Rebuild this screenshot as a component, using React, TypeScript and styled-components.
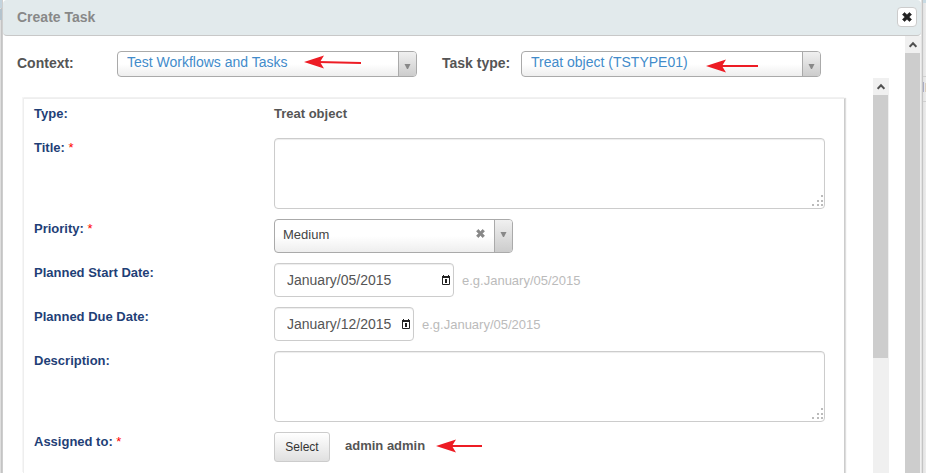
import React from "react";
import styled, { createGlobalStyle } from "styled-components";

const GlobalStyle = createGlobalStyle`
  *, *::before, *::after { box-sizing: border-box; }
  body {
    margin: 0;
    overflow: hidden;
    background: #f4f4f4;
    color: #555;
    font: 13px/20px "Liberation Sans", Arial, sans-serif;
  }
  button, input, select, textarea { font-family: inherit; margin: 0; }
`;

const Page = styled.div`
  display: flex;
  height: 100vh;
`;

const LeftEdge = styled.div`
  flex: none;
  width: 3px;
  background:
    linear-gradient(#c3d3dd 8px, transparent 8px, transparent 9px, #b4c3cd 9px, #b4c3cd 20px, transparent 20px)
      0 0 / 2px 20px no-repeat,
    linear-gradient(90deg, #dedede 1px, #c4c4c4 1px, #c4c4c4 2px, #cecece 2px);
`;

const RightEdge = styled.div`
  flex: none;
  width: 5px;
  background:
    linear-gradient(#c9dbe4, #c9dbe4) 2px 0 / 3px 3px no-repeat,
    linear-gradient(#d0d0d0, #d0d0d0) 2px 76px / 3px 1px no-repeat,
    linear-gradient(#a9acc4, #a9acc4) 2px 82px / 1px 10px no-repeat,
    linear-gradient(#dccfc0, #dccfc0) 4px 83px / 1px 9px no-repeat,
    linear-gradient(#d0d0d0, #d0d0d0) 2px 101px / 3px 1px no-repeat,
    linear-gradient(90deg, #e2e2e2 1px, #c4c4c4 1px, #c4c4c4 2px, #e2e2e2 2px, #ededed);
`;

const Dialog = styled.section`
  flex: 1;
  min-width: 0;
  display: flex;
  flex-direction: column;
  background: #fff;
`;

const Header = styled.header`
  flex: none;
  display: flex;
  align-items: center;
  justify-content: space-between;
  height: 36px;
  padding: 0 4px 1px 14px;
  background: #e2eaec;
  border-bottom: 1px solid #c8c8c8;
  border-radius: 4px;
`;

const Title = styled.h1`
  margin: 0;
  color: #888;
  font-size: 14px;
  line-height: 20px;
`;

const CloseButton = styled.button`
  display: grid;
  place-items: center;
  width: 20px;
  height: 20px;
  padding: 0;
  background: #fff;
  border: 1px solid #ccc;
  border-radius: 4px;
`;

const Body = styled.div`
  flex: 1;
  min-height: 0;
  display: flex;
`;

const Content = styled.div`
  flex: 1;
  min-width: 0;
  display: flex;
  flex-direction: column;
`;

const Filters = styled.div`
  flex: none;
  display: flex;
  padding: 15px 84px 0 14px;
`;

const FilterLabel = styled.label<{ $width: number }>`
  flex: none;
  width: ${(p) => p.$width}px;
  color: #555;
  font-size: 14px;
  font-weight: bold;
  line-height: 24px;
`;

const FilterGap = styled.div`
  flex: none;
  width: 25px;
`;

const SelectBox = styled.div<{ $tall?: boolean }>`
  position: relative;
  display: flex;
  flex: ${(p) => (p.$tall ? "none" : "1")};
  min-width: 0;
  width: ${(p) => (p.$tall ? "239px" : "auto")};
  height: ${(p) => (p.$tall ? 34 : 26)}px;
  overflow: hidden;
  background: linear-gradient(#fff 50%, #eee);
  border: 1px solid #aaa;
  border-radius: 4px;
`;

const Select = styled.select<{ $tall?: boolean }>`
  appearance: none;
  flex: 1;
  min-width: 0;
  padding: 0 24px 4px ${(p) => (p.$tall ? 8 : 9)}px;
  background: none;
  border: 0;
  color: ${(p) => (p.$tall ? "#444" : "#428bca")};
  font-size: ${(p) => (p.$tall ? 13 : 14)}px;
`;

const ArrowCell = styled.span`
  flex: none;
  display: flex;
  justify-content: center;
  width: 18px;
  padding-top: 12px;
  background: linear-gradient(#f0f0f0, #ccc);
  border-left: 1px solid #aaa;
`;

const ClearButton = styled.button`
  align-self: flex-start;
  display: grid;
  width: 9px;
  margin: 9px 9px 0 0;
  padding: 0;
  background: none;
  border: 0;
`;

const Pointer = styled.span<{ $left: number; $top: number }>`
  position: absolute;
  left: ${(p) => p.$left}px;
  top: ${(p) => p.$top}px;
  display: flex;
  pointer-events: none;
`;

const Scroller = styled.div`
  flex: 1;
  min-height: 0;
  display: flex;
  margin-top: 1px;
  padding: 0 16px 0 20px;
`;

const PanelArea = styled.div`
  flex: 1;
  min-width: 0;
  display: flex;
  flex-direction: column;
  padding: 20px 28px 0 0;
`;

const Panel = styled.form`
  flex: 1 0 auto;
  display: flex;
  flex-direction: column;
  gap: 10px;
  padding: 5px 19px 10px 10px;
  border: 1px solid #eee;
  border-right-color: #ccc;
  border-bottom: 0;
  box-shadow: 1px 0 1px #ddd, -1px -1px 0 #f6f6f6;
`;

const Row = styled.div`
  flex: none;
  display: flex;
  min-height: 24px;
`;

const Label = styled.label`
  flex: none;
  width: 240px;
  color: #1f3f77;
  font-weight: bold;
`;

const Star = styled.span`
  color: #f00;
  font-weight: normal;
`;

const Strong = styled.strong`
  color: #555;
`;

const AreaBox = styled.div`
  position: relative;
  flex: 1;
  display: flex;
`;

const TextArea = styled.textarea`
  flex: 1;
  height: 71px;
  padding: 6px 12px;
  resize: none;
  background: #fff;
  border: 1px solid #ccc;
  border-radius: 4px;
  box-shadow: inset 0 1px 1px rgba(0, 0, 0, 0.075);
`;

const Grip = styled.svg`
  position: absolute;
  right: 1px;
  bottom: 1px;
  pointer-events: none;
`;

const DateBox = styled.div<{ $width: number }>`
  flex: none;
  display: flex;
  align-items: center;
  width: ${(p) => p.$width}px;
  height: 34px;
  padding: 0 3px 0 12px;
  background: #fff;
  border: 1px solid #ccc;
  border-radius: 4px;
  box-shadow: inset 0 1px 1px rgba(0, 0, 0, 0.075);
`;

const DateInput = styled.input`
  flex: 1;
  min-width: 0;
  height: 32px;
  padding: 0;
  background: none;
  border: 0;
  color: #555;
  font-size: 14px;
`;

const IconButton = styled.button`
  display: grid;
  padding: 0;
  background: none;
  border: 0;
`;

const Hint = styled.span`
  height: 34px;
  margin-left: 8px;
  color: #bbb;
  line-height: 36px;
`;

const PickButton = styled.button`
  width: 56px;
  height: 30px;
  padding: 0;
  background: linear-gradient(#fff, #e0e0e0);
  border: 1px solid #ccc;
  border-radius: 3px;
  color: #333;
  font-size: 12px;
`;

const Assignee = styled.div`
  display: flex;
  align-items: center;
  gap: 11px;
  padding: 0 0 2px 15px;
`;

const Track = styled.div`
  flex: none;
  display: flex;
  flex-direction: column;
  width: 16px;
  background: #f0f0f0;
`;

const TrackButton = styled.button`
  flex: none;
  display: grid;
  place-items: center;
  height: 17px;
  padding: 0;
  background: #f0f0f0;
  border: 0;
`;

const Thumb = styled.div<{ $share: number }>`
  flex: 0 0 ${(p) => p.$share * 100}%;
  width: 15px;
  background: #cdcdcd;
`;

const Cross = ({ size, color }: { size: number; color: string }) => (
  <svg width={size} height={size} viewBox="0 0 10 10" aria-hidden="true">
    <path
      d="M2.6 0.4 5 2.8 7.4 0.4 9.6 2.6 7.2 5 9.6 7.4 7.4 9.6 5 7.2 2.6 9.6 0.4 7.4 2.8 5 0.4 2.6Z"
      fill={color}
      stroke={color}
      strokeWidth="0.5"
      strokeLinejoin="round"
    />
  </svg>
);

const Triangle = () => (
  <svg width="7" height="5" viewBox="0 0 7 5" aria-hidden="true">
    <path d="M0.500 0H6.500L4 5H3Z" fill="#888" />
  </svg>
);

const RedArrow = ({ length, slope = 0 }: { length: number; slope?: number }) => (
  <svg width={length} height="14" viewBox={`0 0 ${length} 14`} aria-hidden="true">
    <path d={`M14 7 ${length} ${7 + slope}`} stroke="#ed1c24" strokeWidth="2" />
    <path d="M0 7 20 0.4 16 7 20 13.6Z" fill="#ed1c24" />
  </svg>
);

const CalendarIcon = () => (
  <svg width="8" height="10" viewBox="0 0 8 10" aria-hidden="true">
    <path
      d="M0 1H1V0H2V1H6V0H7V1H8V9Q8 10 7 10H1Q0 10 0 9ZM1 3V9H7V3Z"
      fill="#222"
      fillRule="evenodd"
    />
    <path d="M3 4H5V8H3Z" fill="#222" />
  </svg>
);

const ScrollBar = ({ share }: { share: number }) => (
  <Track>
    <TrackButton type="button" aria-label="Scroll up">
      <svg width="8" height="7" viewBox="0 0 8 7" aria-hidden="true">
        <path d="M0.6 5.900 4 2.300 7.400 5.900" fill="none" stroke="#505050" strokeWidth="2" />
      </svg>
    </TrackButton>
    <Thumb $share={share} />
  </Track>
);

type FilterProps = {
  id: string;
  label: string;
  labelWidth: number;
  value: string;
  arrow: React.ReactNode;
};

const Filter = ({ id, label, labelWidth, value, arrow }: FilterProps) => (
  <>
    <FilterLabel htmlFor={id} $width={labelWidth}>{label}</FilterLabel>
    <SelectBox>
      <Select id={id} defaultValue={value}>
        <option>{value}</option>
      </Select>
      {arrow}
      <ArrowCell><Triangle /></ArrowCell>
    </SelectBox>
  </>
);

const LargeText = ({ id }: { id: string }) => (
  <AreaBox>
    <TextArea id={id} />
    <Grip width="12" height="13" viewBox="0 0 12 13" aria-hidden="true">
      <path
        d="M9 0h2v2h-2zM5 5h2v2h-2zM9 5h2v2h-2zM0 9h2v2h-2zM5 9h2v2h-2zM9 9h2v2h-2z"
        fill="#bbb"
      />
    </Grip>
  </AreaBox>
);

type DateRowProps = { id: string; label: string; width: number; value: string };

const DateRow = ({ id, label, width, value }: DateRowProps) => (
  <Row>
    <Label htmlFor={id}>{label}</Label>
    <DateBox $width={width}>
      <DateInput id={id} type="text" defaultValue={value} />
      <IconButton type="button" aria-label="Open calendar"><CalendarIcon /></IconButton>
    </DateBox>
    <Hint>e.g.January/05/2015</Hint>
  </Row>
);

export default function App() {
  return (
    <Page>
      <GlobalStyle />
      <LeftEdge />
      <Dialog role="dialog" aria-labelledby="dialog-title">
        <Header>
          <Title id="dialog-title">Create Task</Title>
          <CloseButton type="button" aria-label="Close">
            <Cross size={10} color="#222" />
          </CloseButton>
        </Header>
        <Body>
          <Content>
            <Filters>
              <Filter
                id="context"
                label="Context:"
                labelWidth={100}
                value="Test Workflows and Tasks"
                arrow={<Pointer $left={186} $top={3}><RedArrow length={57} slope={1} /></Pointer>}
              />
              <FilterGap />
              <Filter
                id="task-type"
                label="Task type:"
                labelWidth={79}
                value="Treat object (TSTYPE01)"
                arrow={<Pointer $left={184} $top={7}><RedArrow length={52} /></Pointer>}
              />
            </Filters>
            <Scroller>
              <PanelArea>
                <Panel>
                  <Row>
                    <Label as="span">Type:</Label>
                    <Strong>Treat object</Strong>
                  </Row>
                  <Row>
                    <Label htmlFor="title">Title: <Star>*</Star></Label>
                    <LargeText id="title" />
                  </Row>
                  <Row>
                    <Label htmlFor="priority">Priority: <Star>*</Star></Label>
                    <SelectBox $tall>
                      <Select id="priority" $tall defaultValue="Medium">
                        <option>Medium</option>
                      </Select>
                      <ClearButton type="button" aria-label="Clear priority">
                        <Cross size={9} color="#888" />
                      </ClearButton>
                      <ArrowCell><Triangle /></ArrowCell>
                    </SelectBox>
                  </Row>
                  <DateRow id="start" label="Planned Start Date:" width={180} value="January/05/2015" />
                  <DateRow id="due" label="Planned Due Date:" width={140} value="January/12/2015" />
                  <Row>
                    <Label htmlFor="description">Description:</Label>
                    <LargeText id="description" />
                  </Row>
                  <Row>
                    <Label htmlFor="assignee">Assigned to: <Star>*</Star></Label>
                    <PickButton id="assignee" type="button">Select</PickButton>
                    <Assignee>
                      <Strong>admin admin</Strong>
                      <RedArrow length={46} />
                    </Assignee>
                  </Row>
                </Panel>
              </PanelArea>
              <ScrollBar share={2 / 3} />
            </Scroller>
          </Content>
          <ScrollBar share={1} />
        </Body>
      </Dialog>
      <RightEdge />
    </Page>
  );
}
